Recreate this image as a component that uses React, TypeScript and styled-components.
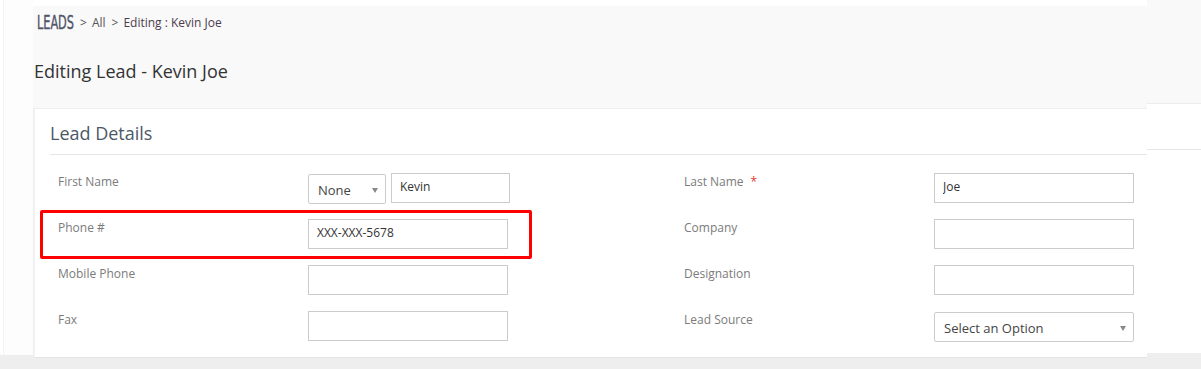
import type { FC } from 'react';
import styled, { createGlobalStyle } from 'styled-components';

const GlobalStyle = createGlobalStyle`
  html, body {
    margin: 0;
    padding: 0;
    background: #eeeeee;
  }
  * {
    box-sizing: border-box;
  }
`;

interface FieldProps {
  label: string;
  required?: boolean;
}

const leftFields: FieldProps[] = [
  { label: 'First Name' },
  { label: 'Phone #' },
  { label: 'Mobile Phone' },
  { label: 'Fax' },
];

const rightFields: FieldProps[] = [
  { label: 'Last Name', required: true },
  { label: 'Company' },
  { label: 'Designation' },
  { label: 'Lead Source' },
];

const Label: FC<FieldProps> = ({ label, required }) => (
  <FieldLabel>
    {label}
    {required && <Required>*</Required>}
  </FieldLabel>
);

export default function App() {
  return (
    <>
      <GlobalStyle />
      <Page>
        <Columns>
          <Gutter />
          <Main>
            <Header>
              <Breadcrumb>
                <Brand>
                  <BrandText>LEADS</BrandText>
                </Brand>
                <Sep>&gt;</Sep>
                <Crumb>All</Crumb>
                <Sep>&gt;</Sep>
                <Crumb $current>Editing : Kevin Joe</Crumb>
              </Breadcrumb>
              <Title>Editing Lead - Kevin Joe</Title>
            </Header>
            <Card>
              <CardTitle>Lead Details</CardTitle>
              <Form>
                <Label {...leftFields[0]} />
                <InputGroup>
                  <Select $width={78}>
                    None
                    <Caret />
                  </Select>
                  <TextInput $width={119} defaultValue="Kevin" />
                </InputGroup>
                <Label {...rightFields[0]} />
                <TextInput defaultValue="Joe" />

                <Label {...leftFields[1]} />
                <TextInput defaultValue="XXX-XXX-5678" />
                <Label {...rightFields[1]} />
                <TextInput />

                <Label {...leftFields[2]} />
                <TextInput />
                <Label {...rightFields[2]} />
                <TextInput />

                <Label {...leftFields[3]} />
                <TextInput />
                <Label {...rightFields[3]} />
                <Select $width={200}>
                  Select an Option
                  <Caret />
                </Select>

                <Highlight />
              </Form>
            </Card>
          </Main>
          <Sliver>
            <SliverTop />
            <SliverCard>
              <SliverHead />
            </SliverCard>
          </Sliver>
        </Columns>
      </Page>
    </>
  );
}

const Page = styled.div`
  width: 1201px;
  height: 369px;
  overflow: hidden;
  background: #eeeeee;
  font-family: 'Open Sans', 'Liberation Sans', sans-serif;
`;

const Columns = styled.div`
  display: flex;
  align-items: flex-start;
  height: 358px;
`;

const Gutter = styled.div`
  width: 33px;
  height: 355px;
  background: #fdfdfd;
  border-left: 3px solid #ffffff;
  box-shadow: inset 1px 0 0 #f3f3f3;
`;

const Main = styled.div`
  width: 1114px;
  height: 358px;
  display: flex;
  flex-direction: column;
`;

const Header = styled.div`
  height: 108px;
  flex-shrink: 0;
  background: #f9f9f9;
  border-top: 6px solid #ffffff;
  padding: 6px 0 0 4px;
`;

const Breadcrumb = styled.div`
  display: flex;
  align-items: center;
  height: 20px;
  font-size: 12px;
  color: #555555;
`;

const Brand = styled.span`
  display: inline-block;
  width: 37px;
  height: 20px;
  overflow: visible;
  white-space: nowrap;
`;

const BrandText = styled.span`
  display: inline-block;
  font-family: 'DejaVu Sans Condensed', 'DejaVu Sans', sans-serif;
  font-stretch: condensed;
  font-size: 19px;
  line-height: 20px;
  color: #4f5468;
  -webkit-text-stroke: 0.4px #4f5468;
  transform: scaleX(0.66);
  transform-origin: left center;
`;

const Sep = styled.span`
  margin: 0 5px 0 6px;
  font-size: 12px;
  color: #555555;
`;

const Crumb = styled.span<{ $current?: boolean }>`
  color: ${({ $current }) => ($current ? '#4b3c4f' : '#555555')};
`;

const Title = styled.h1`
  margin: 27px 0 0 -3px;
  font-size: 18px;
  font-weight: 400;
  line-height: 24px;
  color: #333333;
`;

const Card = styled.div`
  flex: 1;
  margin-left: 1px;
  background: #ffffff;
  border-top: 1px solid #efefef;
  border-left: 1px solid #f2f2f2;
  border-bottom: 1px solid #e4e4e4;
  padding-left: 15px;
`;

const CardTitle = styled.h2`
  margin: 0;
  height: 46px;
  display: flex;
  align-items: center;
  padding-top: 2px;
  font-size: 18px;
  font-weight: 400;
  color: #4c5866;
  border-bottom: 1px solid #e6e6e6;
`;

const Form = styled.div`
  position: relative;
  display: grid;
  grid-template-columns: 250px 376px 250px 1fr;
  grid-auto-rows: 46px;
  padding: 18px 0 0 8px;
`;

const FieldLabel = styled.div`
  font-size: 12px;
  line-height: 17px;
  color: #7b7b7b;
`;

const Required = styled.span`
  margin-left: 7px;
  color: #e8382f;
`;

const InputGroup = styled.div`
  display: flex;
  align-items: flex-start;
  gap: 5px;
`;

const TextInput = styled.input<{ $width?: number }>`
  width: ${({ $width }) => $width ?? 200}px;
  height: 30px;
  margin: 0;
  padding: 0 8px 3px;
  border: 1px solid #cccccc;
  border-radius: 0;
  outline: none;
  background: #ffffff;
  font-family: 'Open Sans', 'Liberation Sans', sans-serif;
  font-size: 12px;
  color: #333333;
`;

const Select = styled.div<{ $width: number }>`
  position: relative;
  width: ${({ $width }) => $width}px;
  height: 30px;
  margin-top: 1px;
  padding: 2px 9px 0;
  display: flex;
  align-items: center;
  border: 1px solid #cccccc;
  border-radius: 2px;
  background: #ffffff;
  font-size: 13px;
  color: #444444;
`;

const Caret = styled.span`
  position: absolute;
  right: 7px;
  top: 13px;
  width: 0;
  height: 0;
  border-left: 3px solid transparent;
  border-right: 3px solid transparent;
  border-top: 5px solid #888888;
`;

const Highlight = styled.div`
  position: absolute;
  left: -10px;
  top: 55px;
  width: 492px;
  height: 49px;
  border: 3px solid #ff0000;
  border-radius: 2px;
  pointer-events: none;
`;

const Sliver = styled.div`
  flex: 1;
  height: 353px;
  display: flex;
  flex-direction: column;
`;

const SliverTop = styled.div`
  height: 103px;
  background: #f9f9f9;
`;

const SliverCard = styled.div`
  flex: 1;
  background: #ffffff;
  border-top: 1px solid #ececec;
`;

const SliverHead = styled.div`
  height: 46px;
  border-bottom: 1px solid #e6e6e6;
`;
